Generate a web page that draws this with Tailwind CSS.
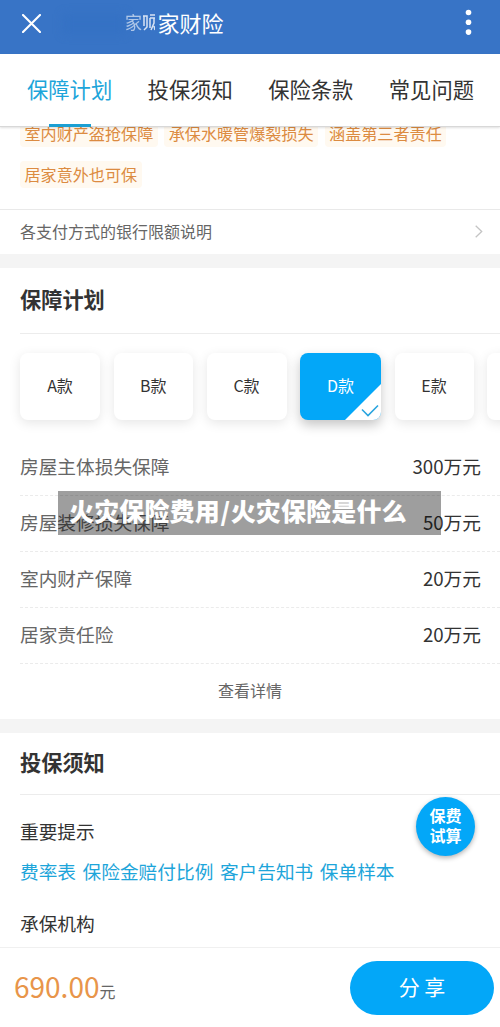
<!DOCTYPE html>
<html lang="zh-CN">
<head>
<meta charset="utf-8">
<title>家财险</title>
<script src="https://cdn.jsdelivr.net/npm/@tailwindcss/browser@4"></script>
</head>
<body class="bg-white font-['Noto_Sans_CJK_SC',sans-serif] text-[#333]">
<div class="relative flex h-[1027px] w-[500px] flex-col overflow-hidden whitespace-nowrap">
  <header class="flex h-[54px] shrink-0 items-center bg-[#3874c6] pb-[7px] pl-[22px] pr-[28px] text-white">
    <svg class="size-[19px]" viewBox="0 0 19 19" fill="none" stroke="currentColor" stroke-width="2.1" stroke-linecap="round"><path d="M1 1 18 18M18 1 1 18"/></svg>
    <div class="ml-[22px] h-5 w-[62px] bg-[#2f6fc4]/40 blur-[5px]"></div>
    <div class="flex h-8 items-center pb-[3px] text-[22px] leading-8">
      <span class="block w-[18px] overflow-hidden text-[17px] opacity-60">家</span>
      <svg class="mr-[2.5px] mt-[2px] h-[18px] w-[12px]" viewBox="0 0 12 18" fill="none" stroke="currentColor" stroke-width="1.5" opacity=".8"><path d="M1 2v10M0 2h4v11l-3 3M7 1h5M7 4v10M11 4v5l-3 7M11 12l1 4M7 4h5"/></svg>
      <span>家财险</span>
    </div>
    <svg class="ml-auto h-[27px] w-[7px] translate-y-[-1px]" viewBox="0 0 7 27" fill="currentColor"><circle cx="3.5" cy="3.5" r="2.8"/><circle cx="3.5" cy="13.3" r="2.8"/><circle cx="3.5" cy="23.1" r="2.8"/></svg>
  </header>

  <nav class="z-10 flex h-[73px] shrink-0 justify-between border-b border-[#d8d8d8] bg-white pl-[27px] pr-[26px] text-[21.3px] leading-[69px] shadow-[0_1px_2px_rgba(0,0,0,0.12)]">
    <div class="relative text-[#1da5da]">保障计划<span class="absolute bottom-[-1px] left-[22px] h-[3px] w-[42px] bg-[#1b9fd3]"></span></div>
    <div>投保须知</div>
    <div>保险条款</div>
    <div>常见问题</div>
  </nav>

  <section class="flex h-[83px] shrink-0 flex-col gap-[14px] border-b border-[#e9e9e9] pl-5 text-[16.1px] leading-[26px] text-[#dc8b41]">
    <div class="-mt-[7px] flex gap-[6.5px]">
      <span class="rounded-sm bg-[#fff9f0] px-[4.5px] pb-px">室内财产盗抢保障</span>
      <span class="rounded-sm bg-[#fff9f0] px-[4.5px] pb-px">承保水暖管爆裂损失</span>
      <span class="rounded-sm bg-[#fff9f0] px-[4.5px] pb-px">涵盖第三者责任</span>
    </div>
    <div class="flex"><span class="rounded-sm bg-[#fff9f0] px-[4.5px] pb-px">居家意外也可保</span></div>
  </section>

  <section class="flex h-[44px] shrink-0 items-center justify-between pb-[2px] pl-5 pr-[17px] text-[16px] leading-[40px] text-[#666]">
    <span class="-mt-px">各支付方式的银行限额说明</span>
    <svg class="h-[13px] w-2" viewBox="0 0 8 13" fill="none" stroke="#c4c4c4" stroke-width="1.3"><path d="m.7.7 6 5.8-6 5.8"/></svg>
  </section>
  <div class="h-[14px] shrink-0 bg-[#f4f4f4]"></div>

  <section class="h-[451px] shrink-0">
    <h2 class="ml-5 h-[66px] border-b border-[#ececec] text-[21.2px] font-bold leading-[62px]">保障计划</h2>
    <div class="flex h-[106px] gap-[13.5px] overflow-hidden pl-5 pt-[19px] text-[16px] leading-[65px]">
      <div class="h-[67px] w-[80px] shrink-0 rounded-lg bg-white text-center shadow-[0_3px_12px_rgba(0,0,0,0.1)]">A款</div>
      <div class="h-[67px] w-[79.5px] shrink-0 rounded-lg bg-white text-center shadow-[0_3px_12px_rgba(0,0,0,0.1)]">B款</div>
      <div class="h-[67px] w-[80px] shrink-0 rounded-lg bg-white text-center shadow-[0_3px_12px_rgba(0,0,0,0.1)]">C款</div>
      <div class="relative h-[67px] w-[81px] shrink-0 rounded-lg bg-[#03a7f8] text-center text-white shadow-[0_5px_12px_rgba(0,0,0,0.23)]">D款
        <svg class="absolute bottom-0 right-0 h-[36px] w-[36px] rounded-br-lg" viewBox="0 0 36 36" fill="none"><path d="M36 0V36H0Z" fill="#fff"/><path d="m17 25.5 6 6L33 21.5" stroke="#2aa5df" stroke-width="1.6"/></svg>
      </div>
      <div class="h-[67px] w-[79px] shrink-0 rounded-lg bg-white text-center shadow-[0_3px_12px_rgba(0,0,0,0.1)]">E款</div>
      <div class="h-[67px] w-[80px] shrink-0 rounded-lg bg-white shadow-[0_3px_12px_rgba(0,0,0,0.1)]"></div>
    </div>
    <div class="ml-5 text-[18.7px] leading-[51px]">
      <div class="flex h-[56px] justify-between border-b border-dashed border-[#ebebeb] pr-[19px]"><span class="text-[#666]">房屋主体损失保障</span><span>300万元</span></div>
      <div class="flex h-[56px] justify-between border-b border-dashed border-[#ebebeb] pr-[19px]"><span class="text-[#666]">房屋装修损失保障</span><span>50万元</span></div>
      <div class="flex h-[56px] justify-between border-b border-dashed border-[#ebebeb] pr-[19px]"><span class="text-[#666]">室内财产保障</span><span>20万元</span></div>
      <div class="flex h-[56px] justify-between border-b border-dashed border-[#ebebeb] pr-[19px]"><span class="text-[#666]">居家责任险</span><span>20万元</span></div>
    </div>
    <div class="text-center text-[16px] leading-[53px] text-[#666]">查看详情</div>
  </section>
  <div class="h-[14px] shrink-0 bg-[#f4f4f4]"></div>

  <section class="flex h-[214px] shrink-0 flex-col pl-5 text-[18.7px]">
    <h2 class="h-[62px] shrink-0 border-b border-[#ececec] text-[21.2px] font-bold leading-[58px]">投保须知</h2>
    <div class="mt-[16px] leading-[40px]">重要提示</div>
    <div class="flex gap-[6.5px] leading-[40px] text-[#1da5da]"><span>费率表</span><span>保险金赔付比例</span><span>客户告知书</span><span>保单样本</span></div>
    <div class="mt-3 leading-[40px]">承保机构</div>
  </section>

  <footer class="flex h-[80px] shrink-0 items-center justify-between border-t border-[#f0f0f0] bg-white pl-[14px] pr-[6px]">
    <div class="-mt-[3px] flex items-baseline text-[#e8954a]"><span class="text-[28px] leading-[40px]">690.00</span><span class="text-[16px] text-[#666]">元</span></div>
    <div class="h-[54px] w-[144px] rounded-full bg-[#03a7f8] text-center text-[21px] leading-[50px] text-white">分 享</div>
  </footer>

  <div class="absolute left-[416px] top-[797px] flex size-[59px] flex-col items-center justify-center rounded-full bg-[#03a7f8] pb-[3px] text-[16px] font-bold leading-[20px] text-white shadow-[0_2px_5px_rgba(0,0,0,0.3)]"><span>保费</span><span>试算</span></div>

  <div class="absolute left-[58px] top-[491px] h-[44px] w-[383px] bg-black/38 pl-[11px] text-[25px] font-black leading-[39px] tracking-[0.15px] text-white">火灾保险费用<span class="px-[0.5px]">/</span>火灾保险是什么</div>
</div>
</body>
</html>
